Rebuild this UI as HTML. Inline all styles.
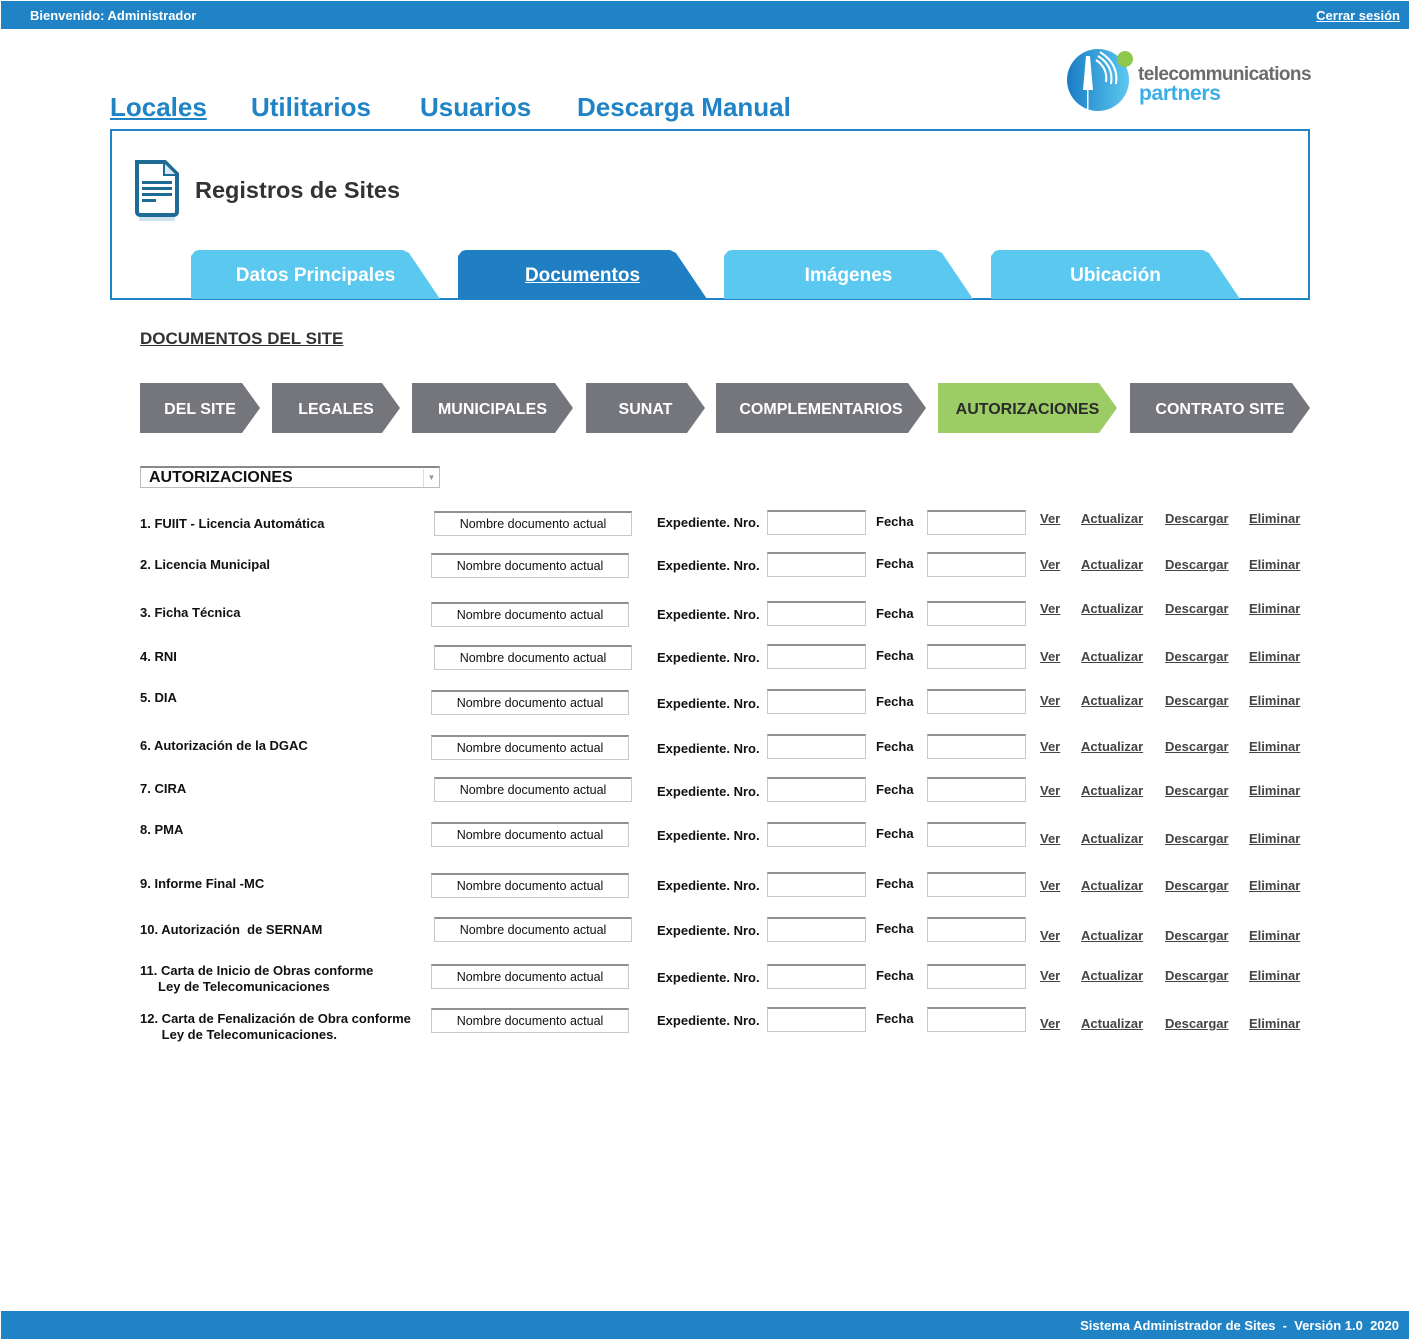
<!DOCTYPE html>
<html><head><meta charset="utf-8"><style>
*{margin:0;padding:0;box-sizing:border-box}
body{width:1410px;height:1340px;position:relative;background:#fff;font-family:"Liberation Sans",Arial,sans-serif;overflow:hidden}
.a{position:absolute;white-space:nowrap}
.bar{position:absolute;left:1px;right:1px;background:#1f83c6;color:#fff;font-weight:bold;font-size:13px}
.nav{position:absolute;top:92px;font-size:26px;font-weight:bold;color:#1f83c6}
.tab{position:absolute;top:250px;height:49px;width:249px;clip-path:polygon(0 6px,4px 1px,8px 0,212px 0,218px 3px,249px 49px,0 49px);background:#5bc8f0;color:#fff;font-weight:bold;font-size:19px;line-height:52px}
.tab span{display:block;width:249px;text-align:center}
.st{position:absolute;top:383px;height:50px;background:#75767b;color:#fff;font-weight:bold;font-size:16px;line-height:54px;clip-path:polygon(0 0,calc(100% - 18px) 0,100% 50%,calc(100% - 18px) 100%,0 100%)}
.st span{display:block;text-align:center}
.lb{position:absolute;left:140px;font-size:13px;font-weight:bold;color:#111;line-height:16px}
.nm{position:absolute;width:198px;height:25px;border:1px solid #c8c8c8;border-top:2px solid #909090;font-size:12.5px;text-align:center;line-height:23px;color:#111}
.ex{position:absolute;left:657px;font-size:13px;font-weight:bold;color:#111}
.in{position:absolute;width:99px;height:25px;border:1px solid #c8c8c8;border-top:2px solid #909090}
.fe{position:absolute;left:876px;font-size:13px;font-weight:bold;color:#111}
.lk{position:absolute;font-size:13px;font-weight:bold;color:#444;text-decoration:underline}
</style></head><body>
<div class="bar" style="top:1px;height:28px"><span class="a" style="left:29px;top:7px">Bienvenido: Administrador</span><span class="a" style="right:9px;top:7px;text-decoration:underline">Cerrar sesión</span></div>

<div class="nav" style="left:110px;text-decoration:underline">Locales</div>
<div class="nav" style="left:251px">Utilitarios</div>
<div class="nav" style="left:420px">Usuarios</div>
<div class="nav" style="left:577px">Descarga Manual</div>

<svg class="a" style="left:1066px;top:48px" width="70" height="64" viewBox="0 0 70 64">
<defs><linearGradient id="g" x1="0" x2="1"><stop offset="0" stop-color="#1a7cc4"/><stop offset="1" stop-color="#5bc8f0"/></linearGradient></defs>
<circle cx="32" cy="32" r="31" fill="url(#g)"/>
<path d="M20 8 L24 8 L27 42 L17 42 Z" fill="#fff"/><rect x="21" y="42" width="1.5" height="20" fill="#fff"/>
<g fill="none" stroke="#fff" stroke-width="2"><path d="M30 12 Q42 20 40 34"/><path d="M32 8 Q48 18 45 36"/><path d="M34 4 Q53 16 50 36"/></g>
<circle cx="59" cy="11" r="8" fill="#8cc84b"/></svg>
<div class="a" style="left:1138px;top:64px;font-size:19px;font-weight:bold;color:#6b6b6b;letter-spacing:-0.6px">telecommunications</div>
<div class="a" style="left:1139px;top:82px;font-size:21px;font-weight:bold;color:#3aaee6;letter-spacing:-0.3px">partners</div>

<div class="a" style="left:110px;top:129px;width:1200px;height:171px;border:2px solid #1f83c6"></div>
<svg class="a" style="left:131px;top:158px" width="52" height="64" viewBox="0 0 52 64">
<path d="M6 4 H34 L46 16 V54 a3 3 0 0 1 -3 3 H9 a3 3 0 0 1 -3 -3 Z" fill="#fff" stroke="#1e6b95" stroke-width="4"/>
<path d="M33 5 V17 H45" fill="#dceaf2" stroke="#1e6b95" stroke-width="2"/>
<g fill="#1e6b95"><rect x="11" y="23" width="30" height="3"/><rect x="11" y="29" width="30" height="3"/><rect x="11" y="35" width="30" height="3"/><rect x="11" y="41" width="14" height="3"/></g>
<rect x="8" y="59" width="36" height="4" fill="#cfe3ee"/></svg>
<div class="a" style="left:195px;top:177px;font-size:23.5px;font-weight:bold;color:#333">Registros de Sites</div>

<div class="tab" style="left:191px"><span>Datos Principales</span></div>
<div class="tab" style="left:458px;background:#1f7fc2"><span style="text-decoration:underline">Documentos</span></div>
<div class="tab" style="left:724px"><span>Imágenes</span></div>
<div class="tab" style="left:991px"><span>Ubicación</span></div>

<div class="a" style="left:140px;top:329px;font-size:17px;font-weight:bold;color:#333;text-decoration:underline">DOCUMENTOS DEL SITE</div>

<div class="st" style="left:140px;width:120px"><span>DEL SITE</span></div>
<div class="st" style="left:272px;width:128px"><span>LEGALES</span></div>
<div class="st" style="left:412px;width:161px"><span>MUNICIPALES</span></div>
<div class="st" style="left:586px;width:119px"><span>SUNAT</span></div>
<div class="st" style="left:716px;width:210px"><span>COMPLEMENTARIOS</span></div>
<div class="st" style="left:938px;width:179px;background:#9ccc65;color:#2b2b2b"><span>AUTORIZACIONES</span></div>
<div class="st" style="left:1130px;width:180px"><span>CONTRATO SITE</span></div>

<div class="a" style="left:140px;top:466px;width:300px;height:22px;border:1px solid #bbb;border-top:2px solid #888"></div>
<div class="a" style="left:149px;top:469px;font-size:16px;font-weight:bold;color:#111">AUTORIZACIONES</div>
<div class="a" style="left:423px;top:469px;width:16px;height:18px;border-left:1px solid #ddd;font-size:8px;color:#999;text-align:center;line-height:18px">▼</div>

<div class="lb" style="top:516px">1. FUIIT - Licencia Automática</div>
<div class="nm" style="left:434px;top:511px">Nombre documento actual</div>
<div class="ex" style="top:515px">Expediente. Nro.</div><div class="in" style="left:767px;top:510px"></div>
<div class="fe" style="top:514px">Fecha</div><div class="in" style="left:927px;top:510px"></div>
<div class="lk" style="left:1040px;top:511px">Ver</div><div class="lk" style="left:1081px;top:511px">Actualizar</div><div class="lk" style="left:1165px;top:511px">Descargar</div><div class="lk" style="left:1249px;top:511px">Eliminar</div>

<div class="lb" style="top:557px">2. Licencia Municipal</div>
<div class="nm" style="left:431px;top:553px">Nombre documento actual</div>
<div class="ex" style="top:558px">Expediente. Nro.</div><div class="in" style="left:767px;top:552px"></div>
<div class="fe" style="top:556px">Fecha</div><div class="in" style="left:927px;top:552px"></div>
<div class="lk" style="left:1040px;top:557px">Ver</div><div class="lk" style="left:1081px;top:557px">Actualizar</div><div class="lk" style="left:1165px;top:557px">Descargar</div><div class="lk" style="left:1249px;top:557px">Eliminar</div>

<div class="lb" style="top:605px">3. Ficha Técnica</div>
<div class="nm" style="left:431px;top:602px">Nombre documento actual</div>
<div class="ex" style="top:607px">Expediente. Nro.</div><div class="in" style="left:767px;top:601px"></div>
<div class="fe" style="top:606px">Fecha</div><div class="in" style="left:927px;top:601px"></div>
<div class="lk" style="left:1040px;top:601px">Ver</div><div class="lk" style="left:1081px;top:601px">Actualizar</div><div class="lk" style="left:1165px;top:601px">Descargar</div><div class="lk" style="left:1249px;top:601px">Eliminar</div>

<div class="lb" style="top:649px">4. RNI</div>
<div class="nm" style="left:434px;top:645px">Nombre documento actual</div>
<div class="ex" style="top:650px">Expediente. Nro.</div><div class="in" style="left:767px;top:644px"></div>
<div class="fe" style="top:648px">Fecha</div><div class="in" style="left:927px;top:644px"></div>
<div class="lk" style="left:1040px;top:649px">Ver</div><div class="lk" style="left:1081px;top:649px">Actualizar</div><div class="lk" style="left:1165px;top:649px">Descargar</div><div class="lk" style="left:1249px;top:649px">Eliminar</div>

<div class="lb" style="top:690px">5. DIA</div>
<div class="nm" style="left:431px;top:690px">Nombre documento actual</div>
<div class="ex" style="top:696px">Expediente. Nro.</div><div class="in" style="left:767px;top:689px"></div>
<div class="fe" style="top:694px">Fecha</div><div class="in" style="left:927px;top:689px"></div>
<div class="lk" style="left:1040px;top:693px">Ver</div><div class="lk" style="left:1081px;top:693px">Actualizar</div><div class="lk" style="left:1165px;top:693px">Descargar</div><div class="lk" style="left:1249px;top:693px">Eliminar</div>

<div class="lb" style="top:738px">6. Autorización de la DGAC</div>
<div class="nm" style="left:431px;top:735px">Nombre documento actual</div>
<div class="ex" style="top:741px">Expediente. Nro.</div><div class="in" style="left:767px;top:734px"></div>
<div class="fe" style="top:739px">Fecha</div><div class="in" style="left:927px;top:734px"></div>
<div class="lk" style="left:1040px;top:739px">Ver</div><div class="lk" style="left:1081px;top:739px">Actualizar</div><div class="lk" style="left:1165px;top:739px">Descargar</div><div class="lk" style="left:1249px;top:739px">Eliminar</div>

<div class="lb" style="top:781px">7. CIRA</div>
<div class="nm" style="left:434px;top:777px">Nombre documento actual</div>
<div class="ex" style="top:784px">Expediente. Nro.</div><div class="in" style="left:767px;top:777px"></div>
<div class="fe" style="top:782px">Fecha</div><div class="in" style="left:927px;top:777px"></div>
<div class="lk" style="left:1040px;top:783px">Ver</div><div class="lk" style="left:1081px;top:783px">Actualizar</div><div class="lk" style="left:1165px;top:783px">Descargar</div><div class="lk" style="left:1249px;top:783px">Eliminar</div>

<div class="lb" style="top:822px">8. PMA</div>
<div class="nm" style="left:431px;top:822px">Nombre documento actual</div>
<div class="ex" style="top:828px">Expediente. Nro.</div><div class="in" style="left:767px;top:822px"></div>
<div class="fe" style="top:826px">Fecha</div><div class="in" style="left:927px;top:822px"></div>
<div class="lk" style="left:1040px;top:831px">Ver</div><div class="lk" style="left:1081px;top:831px">Actualizar</div><div class="lk" style="left:1165px;top:831px">Descargar</div><div class="lk" style="left:1249px;top:831px">Eliminar</div>

<div class="lb" style="top:876px">9. Informe Final -MC</div>
<div class="nm" style="left:431px;top:873px">Nombre documento actual</div>
<div class="ex" style="top:878px">Expediente. Nro.</div><div class="in" style="left:767px;top:872px"></div>
<div class="fe" style="top:876px">Fecha</div><div class="in" style="left:927px;top:872px"></div>
<div class="lk" style="left:1040px;top:878px">Ver</div><div class="lk" style="left:1081px;top:878px">Actualizar</div><div class="lk" style="left:1165px;top:878px">Descargar</div><div class="lk" style="left:1249px;top:878px">Eliminar</div>

<div class="lb" style="top:922px">10. Autorización&nbsp; de SERNAM</div>
<div class="nm" style="left:434px;top:917px">Nombre documento actual</div>
<div class="ex" style="top:923px">Expediente. Nro.</div><div class="in" style="left:767px;top:917px"></div>
<div class="fe" style="top:921px">Fecha</div><div class="in" style="left:927px;top:917px"></div>
<div class="lk" style="left:1040px;top:928px">Ver</div><div class="lk" style="left:1081px;top:928px">Actualizar</div><div class="lk" style="left:1165px;top:928px">Descargar</div><div class="lk" style="left:1249px;top:928px">Eliminar</div>

<div class="lb" style="top:963px">11. Carta de Inicio de Obras conforme<br>&nbsp;&nbsp;&nbsp;&nbsp;&nbsp;Ley de Telecomunicaciones</div>
<div class="nm" style="left:431px;top:964px">Nombre documento actual</div>
<div class="ex" style="top:970px">Expediente. Nro.</div><div class="in" style="left:767px;top:964px"></div>
<div class="fe" style="top:968px">Fecha</div><div class="in" style="left:927px;top:964px"></div>
<div class="lk" style="left:1040px;top:968px">Ver</div><div class="lk" style="left:1081px;top:968px">Actualizar</div><div class="lk" style="left:1165px;top:968px">Descargar</div><div class="lk" style="left:1249px;top:968px">Eliminar</div>

<div class="lb" style="top:1011px">12. Carta de Fenalización de Obra conforme<br>&nbsp;&nbsp;&nbsp;&nbsp;&nbsp;&nbsp;Ley de Telecomunicaciones.</div>
<div class="nm" style="left:431px;top:1008px">Nombre documento actual</div>
<div class="ex" style="top:1013px">Expediente. Nro.</div><div class="in" style="left:767px;top:1007px"></div>
<div class="fe" style="top:1011px">Fecha</div><div class="in" style="left:927px;top:1007px"></div>
<div class="lk" style="left:1040px;top:1016px">Ver</div><div class="lk" style="left:1081px;top:1016px">Actualizar</div><div class="lk" style="left:1165px;top:1016px">Descargar</div><div class="lk" style="left:1249px;top:1016px">Eliminar</div>

<div class="bar" style="top:1311px;height:28px"><span class="a" style="right:10px;top:7px">Sistema Administrador de Sites&nbsp; - &nbsp;Versión 1.0&nbsp; 2020</span></div>
</body></html>
